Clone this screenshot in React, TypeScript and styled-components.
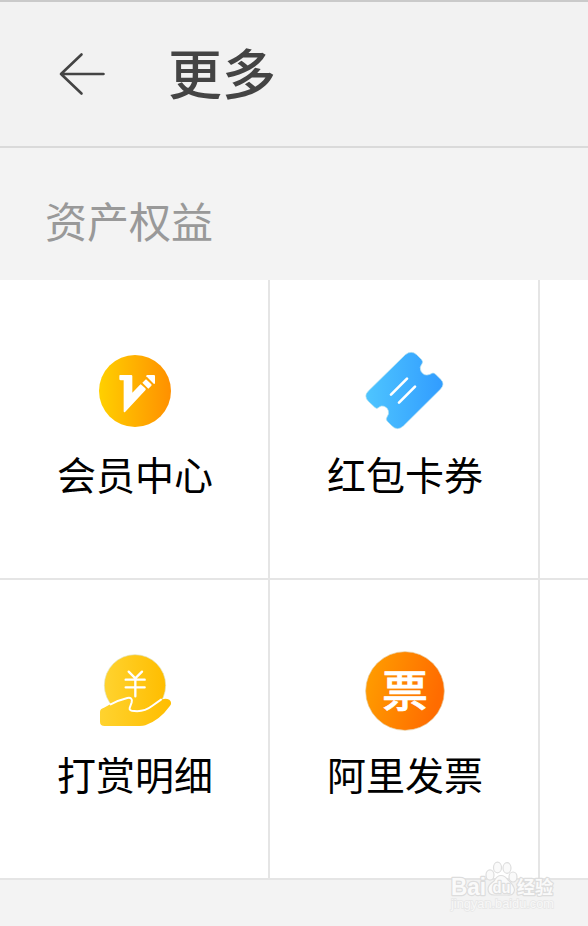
import React from "react";
import styled, { createGlobalStyle } from "styled-components";

const GlobalStyle = createGlobalStyle`
  * { box-sizing: border-box; }
  body {
    margin: 0;
    background: #f3f3f3;
    font-family: "Noto Sans CJK SC", "Noto Sans", sans-serif;
    overflow: hidden;
  }
`;

const Page = styled.main`
  position: relative;
  width: 588px;
  height: 926px;
  overflow: hidden;
  background: #f3f3f3;
`;

const Header = styled.header`
  display: flex;
  align-items: center;
  height: 148px;
  padding-left: 56px;
  border-top: 2px solid #cacaca;
  border-bottom: 2px solid #dadada;
  background: #f2f2f2;
`;

const BackButton = styled.button`
  display: flex;
  width: 52px;
  height: 52px;
  padding: 0;
  border: 0;
  background: none;
`;

const Title = styled.h1`
  margin: 0 0 5px 60px;
  font-size: 54px;
  font-weight: 500;
  line-height: 80px;
  color: #444;
`;

const SectionTitle = styled.h2`
  height: 132px;
  margin: 0;
  padding: 6px 0 0 45px;
  font-size: 42px;
  font-weight: 400;
  line-height: 132px;
  color: #999;
`;

const Grid = styled.section`
  display: grid;
  grid-template-columns: repeat(3, 270px);
  grid-auto-rows: 300px;
  width: 810px;
`;

const Cell = styled.div`
  display: flex;
  flex-direction: column;
  align-items: center;
  padding-top: 60px;
  background: #fff;
  box-shadow: inset -2px -2px #e5e5e5;
`;

const Icon = styled.svg`
  display: block;
  width: 100px;
  height: 100px;
`;

const Label = styled.span`
  margin-top: 4px;
  font-size: 39px;
  line-height: 58px;
  color: #000;
`;

const Glyph = styled.text`
  font-family: "Noto Sans CJK SC", sans-serif;
  font-weight: 500;
`;

const Watermark = styled.svg`
  position: absolute;
  left: 438px;
  top: 850px;
  width: 150px;
  height: 76px;
`;

const MarkText = styled.text`
  font-family: "Liberation Sans", "Noto Sans CJK SC", sans-serif;
  font-weight: 700;
  fill: #fafafa;
  stroke: #dddddd;
  stroke-width: 2.4px;
  paint-order: stroke;
  stroke-linejoin: round;
`;

const MarkUrl = styled.text`
  font-family: "Liberation Sans", sans-serif;
  font-size: 12.5px;
  fill: #f8f8f8;
  stroke: #e6e6e6;
  stroke-width: 1.4px;
  paint-order: stroke;
`;

const MemberIcon = () => (
  <Icon viewBox="0 0 300 300">
    <defs>
      <linearGradient id="member">
        <stop stopColor="#ffd000" />
        <stop offset="1" stopColor="#ff9000" />
      </linearGradient>
    </defs>
    <circle cx="150" cy="153" r="108" fill="url(#member)" />
    <g fill="#fff">
      <path d="M105 105H139Q142 105 142 109V158L165 134Q167 132 169 134L181 145Q184 148 181 151L121 215Q116 220 116 213V121H107Q103 121 103 117V108Q103 105 105 105Z" />
      <path d="M172 128L181 119Q183 117 185 119L199 133Q201 135 199 137L190 146Z" />
      <path d="M184 107Q184 105 187 105H207Q210 105 210 108V129Q209 133 206 131L184 109Z" />
    </g>
  </Icon>
);

const CouponIcon = () => (
  <Icon viewBox="0 0 300 300">
    <defs>
      <linearGradient id="coupon">
        <stop stopColor="#4ec5ff" />
        <stop offset="1" stopColor="#319cff" />
      </linearGradient>
    </defs>
    <path
      d="M151 44Q169 30 185 44L200 59Q205 65 201 71Q192 82 198 94Q207 110 225 103Q235 95 241 102L257 118Q271 132 257 147L145 258Q127 274 111 258L96 243Q91 237 96 231Q103 222 100 212Q95 198 80 198Q74 199 69 204Q64 207 59 202L40 184Q25 168 40 153Z"
      fill="url(#coupon)"
      stroke="#b7e2ee"
      strokeWidth="2"
    />
    <path d="M108 164L156 116M132 188L180 140" stroke="#fff" strokeWidth="8" strokeLinecap="round" />
  </Icon>
);

const RewardIcon = () => (
  <Icon viewBox="0 0 300 300">
    <defs>
      <linearGradient id="reward">
        <stop stopColor="#ffd32f" />
        <stop offset="1" stopColor="#ffbd00" />
      </linearGradient>
    </defs>
    <circle cx="150" cy="136" r="92" fill="url(#reward)" stroke="#dfe3c0" strokeWidth="2" />
    <path
      d="M45 216Q45 206 57 203Q91 182 129 174Q143 173 140 187L134 205Q133 213 148 213Q178 216 201 198L224 181Q240 172 253 179Q263 188 254 199Q224 241 181 256Q175 258 164 258H59Q45 258 45 245Z"
      fill="url(#reward)"
    />
    <path
      d="M77 193Q102 180 127 174Q144 171 140 187L134 204Q132 213 148 213Q178 216 201 198L228 179"
      fill="none" stroke="#fff" strokeWidth="6" strokeLinejoin="round" strokeLinecap="round"
    />
    <path d="M131 95L151 115L171 95M151 115V169M122 119H179M122 142H179" fill="none" stroke="#fff" strokeWidth="7" strokeLinecap="round" />
  </Icon>
);

const InvoiceIcon = () => (
  <Icon viewBox="0 0 300 300">
    <defs>
      <linearGradient id="invoice" x1="0" y1="0" x2="1" y2=".25">
        <stop stopColor="#ffa000" />
        <stop offset="1" stopColor="#ff6c00" />
      </linearGradient>
    </defs>
    <circle cx="150" cy="153" r="118" fill="url(#invoice)" stroke="#e6c898" strokeWidth="2" />
    <Glyph x="150" y="201" textAnchor="middle" fontSize="131" textLength="138" lengthAdjust="spacingAndGlyphs" fill="#fff" stroke="#fff" strokeWidth="2">票</Glyph>
  </Icon>
);

const items = [
  { label: "会员中心", Drawing: MemberIcon },
  { label: "红包卡券", Drawing: CouponIcon },
  null,
  { label: "打赏明细", Drawing: RewardIcon },
  { label: "阿里发票", Drawing: InvoiceIcon },
  null,
];

export default function App() {
  return (
    <>
      <GlobalStyle />
      <Page>
        <Header>
          <BackButton aria-label="返回">
            <svg width="52" height="52" viewBox="0 0 52 52" fill="none" stroke="#444" strokeWidth="2.6" strokeLinecap="round" strokeLinejoin="round">
              <path d="M25.5 6.500L5 26L25.500 45.500M5 26H47.500" />
            </svg>
          </BackButton>
          <Title>更多</Title>
        </Header>
        <SectionTitle>资产权益</SectionTitle>
        <Grid>
          {items.map((item, i) => (
            <Cell key={i}>
              {item && (
                <>
                  <item.Drawing />
                  <Label>{item.label}</Label>
                </>
              )}
            </Cell>
          ))}
        </Grid>
        <Watermark viewBox="0 0 150 76">
          <MarkText x="13" y="44.500" fontSize="23" textLength="35" lengthAdjust="spacingAndGlyphs">Bai</MarkText>
          <g fill="#fafafa" stroke="#dedede" strokeWidth="1.2">
            <ellipse cx="52" cy="25" rx="4" ry="5.2" />
            <ellipse cx="59.5" cy="17.5" rx="4" ry="5.3" />
            <ellipse cx="69" cy="18" rx="4" ry="5.3" />
            <ellipse cx="75" cy="27" rx="4" ry="5" />
            <path d="M63 25.500Q67 25.500 70 30Q76 35 76.500 40Q76 46 69 45H56Q50 45 50 39Q50 35 56 31Q59 25.500 63 25.500Z" />
          </g>
          <MarkText x="54.500" y="43" fontSize="16" textLength="18" lengthAdjust="spacingAndGlyphs">du</MarkText>
          <MarkText x="79" y="43.500" fontSize="18" textLength="36">经验</MarkText>
          <MarkUrl x="13" y="58" textLength="103" lengthAdjust="spacingAndGlyphs">jingyan.baidu.com</MarkUrl>
        </Watermark>
      </Page>
    </>
  );
}
